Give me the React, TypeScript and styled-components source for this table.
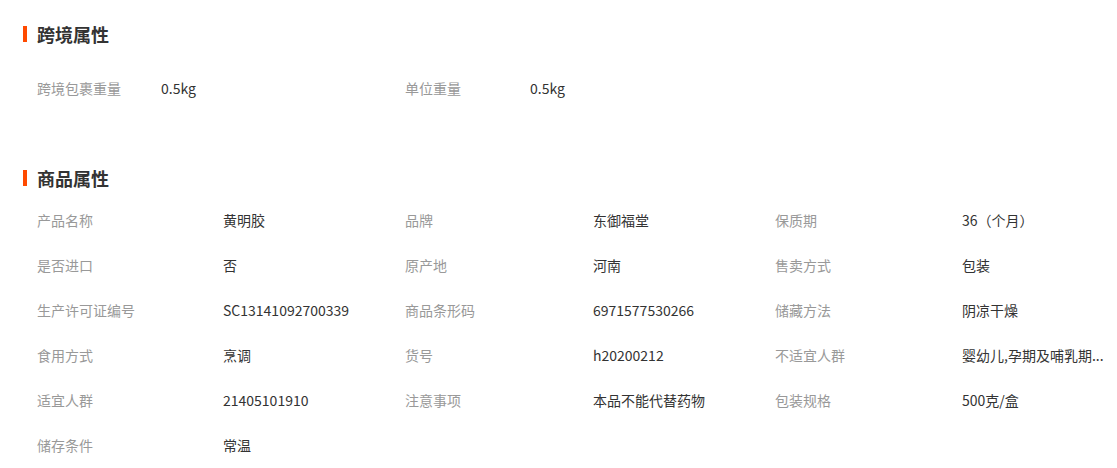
import React from 'react';
import styled, { createGlobalStyle } from 'styled-components';

const GlobalStyle = createGlobalStyle`
  body {
    margin: 0;
    background: #fff;
    font-family: "Microsoft YaHei", "Noto Sans CJK SC", "Noto Sans", sans-serif;
  }
`;

const Page = styled.div`
  width: 1117px;
  padding: 22px 0 0 0;
  box-sizing: border-box;
`;

const Section = styled.section<{ $gap: number }>`
  margin-bottom: ${(p) => p.$gap}px;
`;

const Title = styled.h2`
  display: flex;
  align-items: center;
  margin: 0;
  padding-left: 23px;
  height: 24px;
  font-size: 18px;
  font-weight: bold;
  color: #333;
`;

const Bar = styled.span`
  display: inline-block;
  width: 4px;
  height: 16px;
  margin-right: 10px;
  background: #ff4a00;
`;

const Grid = styled.div<{ $cols: string; $top: number }>`
  display: grid;
  grid-template-columns: ${(p) => p.$cols};
  padding-left: 37px;
  padding-right: 4px;
  margin-top: ${(p) => p.$top}px;
  font-size: 14px;
`;

const Cell = styled.div<{ $label?: boolean }>`
  height: 45px;
  line-height: 45px;
  color: ${(p) => (p.$label ? '#999' : '#333')};
  white-space: nowrap;
  overflow: hidden;
`;

const crossBorder = [
  ['跨境包裹重量', '0.5kg'],
  ['单位重量', '0.5kg'],
];

const productAttrs = [
  ['产品名称', '黄明胶'],
  ['品牌', '东御福堂'],
  ['保质期', '36（个月）'],
  ['是否进口', '否'],
  ['原产地', '河南'],
  ['售卖方式', '包装'],
  ['生产许可证编号', 'SC13141092700339'],
  ['商品条形码', '6971577530266'],
  ['储藏方法', '阴凉干燥'],
  ['食用方式', '烹调'],
  ['货号', 'h20200212'],
  ['不适宜人群', '婴幼儿,孕期及哺乳期...'],
  ['适宜人群', '21405101910'],
  ['注意事项', '本品不能代替药物'],
  ['包装规格', '500克/盒'],
  ['储存条件', '常温'],
];

const App: React.FC = () => {
  return (
    <Page>
      <GlobalStyle />
      <Section $gap={55}>
        <Title>
          <Bar />
          跨境属性
        </Title>
        <Grid $cols="124px 244px 125px 1fr" $top={20}>
          {crossBorder.map(([k, v]) => (
            <React.Fragment key={k}>
              <Cell $label>{k}</Cell>
              <Cell>{v}</Cell>
            </React.Fragment>
          ))}
        </Grid>
      </Section>
      <Section $gap={0}>
        <Title>
          <Bar />
          商品属性
        </Title>
        <Grid $cols="186px 182px 188px 182px 187px 1fr" $top={8}>
          {productAttrs.map(([k, v]) => (
            <React.Fragment key={k}>
              <Cell $label>{k}</Cell>
              <Cell>{v}</Cell>
            </React.Fragment>
          ))}
        </Grid>
      </Section>
    </Page>
  );
};

export default App;
